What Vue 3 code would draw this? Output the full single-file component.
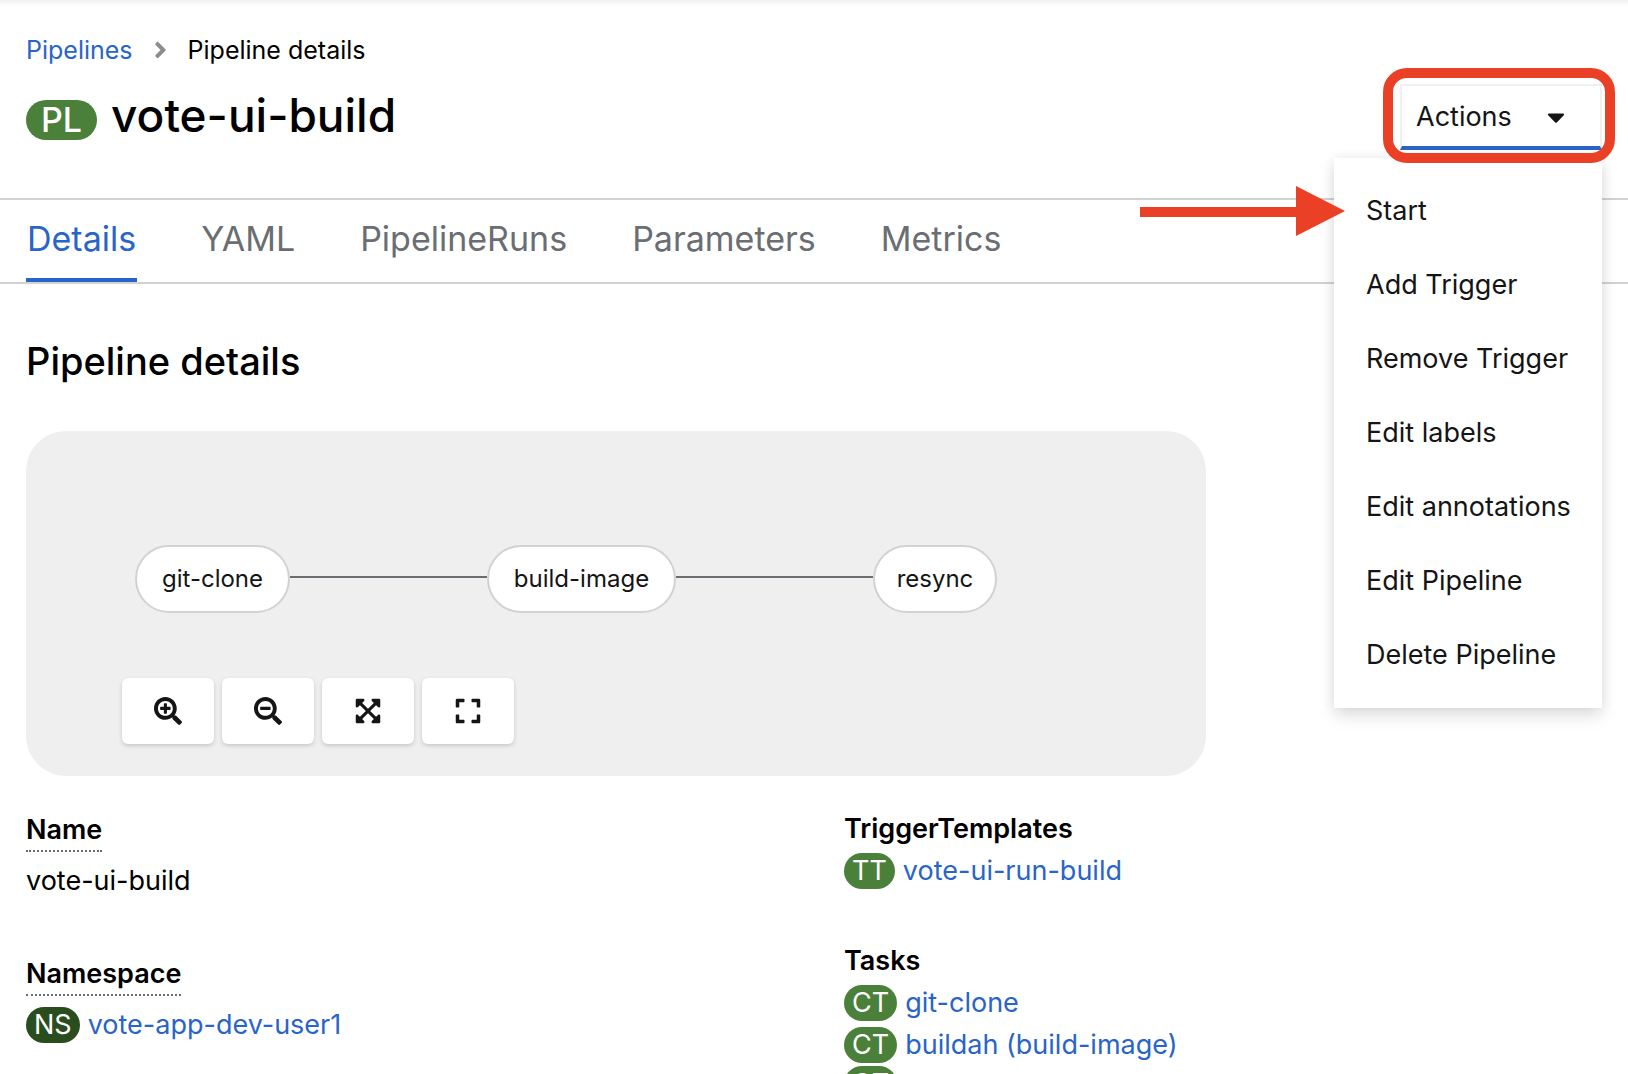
<script setup>
import { ref } from 'vue'

const tabs = ['Details', 'YAML', 'PipelineRuns', 'Parameters', 'Metrics']
const activeTab = ref('Details')

const menuOpen = ref(true)
const actions = [
  'Start',
  'Add Trigger',
  'Remove Trigger',
  'Edit labels',
  'Edit annotations',
  'Edit Pipeline',
  'Delete Pipeline',
]

const nodes = [
  { name: 'git-clone', width: 155 },
  { name: 'build-image', width: 189 },
  { name: 'resync', width: 124 },
]

const lens =
  'm201 284.7L476.7 505c-9.4 9.4-24.6 9.4-33.9 0L343 405.3c-4.5-4.5-7-10.6-7-17V372c-35.3 27.6-79.7 44-128 44C93.1 416 0 322.9 0 208S93.1 0 208 0s208 93.1 208 208c0 48.3-16.4 92.7-44 128h16.3c6.4 0 12.5 2.5 17 7l99.7 99.7c9.3 9.4 9.3 24.6 0 34zM344 208c0-75.2-60.8-136-136-136S72 132.8 72 208s60.8 136 136 136 136-60.8 136-136z'

const controls = [
  {
    label: 'Zoom in',
    box: '0 0 512 512',
    path: 'M304 192v32c0 6.6-5.4 12-12 12h-56v56c0 6.6-5.4 12-12 12h-32c-6.6 0-12-5.4-12-12v-56h-56c-6.6 0-12-5.4-12-12v-32c0-6.6 5.4-12 12-12h56v-56c0-6.6 5.4-12 12-12h32c6.6 0 12 5.4 12 12v56h56c6.6 0 12 5.4 12 12z' + lens,
  },
  {
    label: 'Zoom out',
    box: '0 0 512 512',
    path: 'M304 192v32c0 6.6-5.4 12-12 12H124c-6.6 0-12-5.4-12-12v-32c0-6.6 5.4-12 12-12h168c6.6 0 12 5.4 12 12z' + lens,
  },
  {
    label: 'Fit to screen',
    box: '-32 0 512 512',
    path: 'M448 344v112a23.94 23.94 0 0 1-24 24H312c-21.39 0-32.09-25.9-17-41l36.2-36.2L224 295.6 116.77 402.9 153 439c15.09 15.1 4.39 41-17 41H24a23.94 23.94 0 0 1-24-24V344c0-21.4 25.89-32.1 41-17l36.19 36.2L184.46 256 77.18 148.7 41 185c-15.1 15.1-41 4.4-41-17V56a23.94 23.94 0 0 1 24-24h112c21.39 0 32.09 25.9 17 41l-36.2 36.2L224 216.4l107.23-107.3L295 73c-15.09-15.1-4.39-41 17-41h112a23.94 23.94 0 0 1 24 24v112c0 21.4-25.89 32.1-41 17l-36.19-36.2L263.54 256l107.28 107.3L407 327.1c15.1-15.2 41-4.5 41 16.9z',
  },
  {
    label: 'Reset view',
    box: '-32 0 512 512',
    path: 'M0 180V56c0-13.3 10.7-24 24-24h124c6.6 0 12 5.4 12 12v40c0 6.6-5.4 12-12 12H64v84c0 6.6-5.4 12-12 12H12c-6.6 0-12-5.4-12-12zM288 44v40c0 6.6 5.4 12 12 12h84v84c0 6.6 5.4 12 12 12h40c6.6 0 12-5.4 12-12V56c0-13.3-10.7-24-24-24H300c-6.6 0-12 5.4-12 12zm148 276h-40c-6.6 0-12 5.4-12 12v84h-84c-6.6 0-12 5.4-12 12v40c0 6.6 5.4 12 12 12h124c13.3 0 24-10.7 24-24V332c0-6.6-5.4-12-12-12zM160 468v-40c0-6.6-5.4-12-12-12H64v-84c0-6.6-5.4-12-12-12H12c-6.6 0-12 5.4-12 12v124c0 13.3 10.7 24 24 24h124c6.6 0 12-5.4 12-12z',
  },
]
</script>

<template>
  <div class="page">
    <header class="header">
      <nav class="breadcrumb" aria-label="Breadcrumb">
        <a href="#">Pipelines</a>
        <svg class="chevron" viewBox="0 0 256 512" aria-hidden="true">
          <path d="M224.3 273l-136 136c-9.4 9.4-24.6 9.4-33.9 0l-22.6-22.6c-9.4-9.4-9.4-24.6 0-33.9l96.4-96.4-96.4-96.4c-9.4-9.4-9.4-24.6 0-33.9L54.3 103c9.4-9.4 24.6-9.4 33.9 0l136 136c9.5 9.4 9.5 24.6.1 34z" />
        </svg>
        <span>Pipeline details</span>
      </nav>
      <div class="title-row">
        <h1 class="title">
          <span class="badge badge-large">PL</span>
          <span>vote-ui-build</span>
        </h1>
        <div class="actions">
          <button class="toggle" type="button" :aria-expanded="menuOpen" @click="menuOpen = !menuOpen">
            <span>Actions</span>
            <svg class="caret" viewBox="0 0 320 512" aria-hidden="true">
              <path d="M31.3 192h257.3c17.8 0 26.7 21.5 14.1 34.1L174.1 354.8c-7.8 7.8-20.5 7.8-28.3 0L17.2 226.1C4.6 213.5 13.5 192 31.3 192z" />
            </svg>
          </button>
          <div v-if="menuOpen" class="menu">
            <button v-for="action in actions" :key="action" class="menu-item" type="button">{{ action }}</button>
            <svg class="arrow" viewBox="0 0 205 50" aria-hidden="true">
              <path d="M0 21H156V0L205 25L156 50V31H0Z" />
            </svg>
          </div>
          <div class="highlight"></div>
        </div>
      </div>
    </header>

    <nav class="tabs" aria-label="Pipeline sections">
      <button
        v-for="tab in tabs"
        :key="tab"
        type="button"
        class="tab"
        :class="{ active: tab === activeTab }"
        @click="activeTab = tab"
      >{{ tab }}</button>
    </nav>

    <main class="content">
      <h2 class="heading">Pipeline details</h2>

      <section class="graph">
        <div class="nodes">
          <template v-for="(node, i) in nodes" :key="node.name">
            <div v-if="i" class="edge"></div>
            <div class="node" :style="{ width: node.width + 'px' }">{{ node.name }}</div>
          </template>
        </div>
        <div class="controls">
          <button v-for="c in controls" :key="c.label" class="control" type="button" :aria-label="c.label">
            <svg :viewBox="c.box" aria-hidden="true"><path :d="c.path" /></svg>
          </button>
        </div>
      </section>

      <div class="details">
        <dl class="column column-left">
          <div class="group">
            <dt><span class="hint">Name</span></dt>
            <dd>vote-ui-build</dd>
          </div>
          <div class="group">
            <dt><span class="hint">Namespace</span></dt>
            <dd><span class="badge badge-dark">NS</span><a href="#">vote-app-dev-user1</a></dd>
          </div>
        </dl>
        <dl class="column column-right">
          <div class="group">
            <dt>TriggerTemplates</dt>
            <dd><span class="badge">TT</span><a href="#">vote-ui-run-build</a></dd>
          </div>
          <div class="group">
            <dt>Tasks</dt>
            <dd><span class="badge">CT</span><a href="#">git-clone</a></dd>
            <dd><span class="badge">CT</span><a href="#">buildah (build-image)</a></dd>
            <dd><span class="badge">CT</span></dd>
          </div>
        </dl>
      </div>
    </main>
  </div>
</template>

<style>
body {
  margin: 0;
  background: #fff;
}
</style>

<style scoped>
.page {
  box-sizing: border-box;
  height: 100vh;
  overflow: hidden;
  background: linear-gradient(#f1f1f1, #fff 6px);
  color: #000;
  font-family: Inter, "Open Sans", sans-serif;
  font-size: 27px;
  line-height: 42px;
}

button {
  margin: 0;
  padding: 0;
  border: 0;
  background: none;
  color: #151515;
  font: inherit;
  cursor: pointer;
}

svg {
  display: block;
  fill: currentColor;
}

a {
  color: #2964c8;
  text-decoration: none;
}

.header {
  padding: 34px 26px 48px;
}

.breadcrumb {
  display: flex;
  align-items: center;
  gap: 21px;
  font-size: 25px;
  line-height: 32px;
}

.chevron {
  width: 13px;
  height: 26px;
  color: #8a8d90;
}

.title-row {
  display: flex;
  align-items: center;
  justify-content: space-between;
  margin-top: 18px;
}

.title {
  display: flex;
  align-items: baseline;
  gap: 14px;
  margin: 0;
  padding-bottom: 4px;
  font-size: 46px;
  font-weight: 500;
  line-height: 52px;
}

.badge {
  display: inline-block;
  padding: 0 8px;
  border-radius: 20px;
  background: #4b803a;
  color: #fff;
  line-height: 36px;
}

.badge-large {
  padding: 0 15px;
  font-size: 34px;
  line-height: 40px;
}

.badge-dark {
  background: #2a4d20;
}

.actions {
  position: relative;
}

.toggle {
  display: flex;
  align-items: center;
  justify-content: space-between;
  box-sizing: border-box;
  width: 202px;
  height: 66px;
  padding: 2px 35px 0 14px;
  border: 2px solid #f0f0f0;
  border-bottom: 4px solid #2964c8;
  background: #fff;
}

.caret {
  width: 18px;
  height: 28px;
}

.menu {
  position: absolute;
  z-index: 1;
  top: 74px;
  right: 0;
  width: 268px;
  padding: 16px 0;
  background: #fff;
  box-shadow: 0 8px 16px rgba(0, 0, 0, 0.12), 0 0 12px rgba(0, 0, 0, 0.06);
}

.menu-item {
  display: block;
  width: 100%;
  padding: 0 32px;
  line-height: 74px;
  text-align: left;
  white-space: nowrap;
}

.arrow {
  position: absolute;
  top: 28px;
  left: -194px;
  width: 205px;
  height: 50px;
  color: #ea4126;
  pointer-events: none;
}

.highlight {
  position: absolute;
  z-index: 2;
  inset: -16px -13px -13px -17px;
  border: 10px solid #ea4126;
  border-radius: 24px;
  pointer-events: none;
}

.tabs {
  display: flex;
  gap: 63px;
  padding: 0 26px;
  border-top: 2px solid #d2d2d2;
  border-bottom: 2px solid #d2d2d2;
}

.tab {
  padding: 0 1px;
  border-bottom: 4px solid transparent;
  color: #6a6e73;
  font-size: 34px;
  line-height: 78px;
}

.tab.active {
  border-bottom-color: #2964c8;
  color: #2964c8;
}

.content {
  padding: 53px 26px 0;
}

.heading {
  margin: 0;
  font-size: 38px;
  font-weight: 500;
  line-height: 48px;
}

.graph {
  box-sizing: border-box;
  max-width: 1180px;
  margin-top: 46px;
  padding: 114px 96px 32px;
  border-radius: 40px;
  background: #efefef;
}

.nodes {
  display: flex;
  align-items: center;
  padding-left: 13px;
}

.node {
  box-sizing: border-box;
  border: 2px solid #d2d2d2;
  border-radius: 34px;
  background: #fff;
  color: #151515;
  font-size: 24px;
  line-height: 64px;
  text-align: center;
}

.edge {
  width: 197px;
  height: 2px;
  margin-bottom: 4px;
  background: #6a6e73;
}

.controls {
  display: flex;
  gap: 8px;
  margin-top: 65px;
}

.control {
  display: flex;
  align-items: center;
  justify-content: center;
  width: 92px;
  height: 66px;
  border-radius: 6px;
  background: #fff;
  box-shadow: 0 2px 4px rgba(0, 0, 0, 0.16);
}

.control svg {
  width: 28px;
  height: 28px;
}

.details {
  display: grid;
  grid-template-columns: 1fr 1fr;
  gap: 60px;
  margin-top: 32px;
}

.column {
  display: flex;
  flex-direction: column;
  margin: 0;
}

.column-left {
  gap: 52px;
  padding-top: 2px;
}

.column-right {
  gap: 48px;
}

dt {
  font-weight: 600;
}

dd {
  display: flex;
  align-items: center;
  gap: 8px;
  margin: 0;
}

.hint {
  display: block;
  width: fit-content;
  margin-bottom: 8px;
  border-bottom: 2px dotted #6a6e73;
  line-height: 40px;
}
</style>
